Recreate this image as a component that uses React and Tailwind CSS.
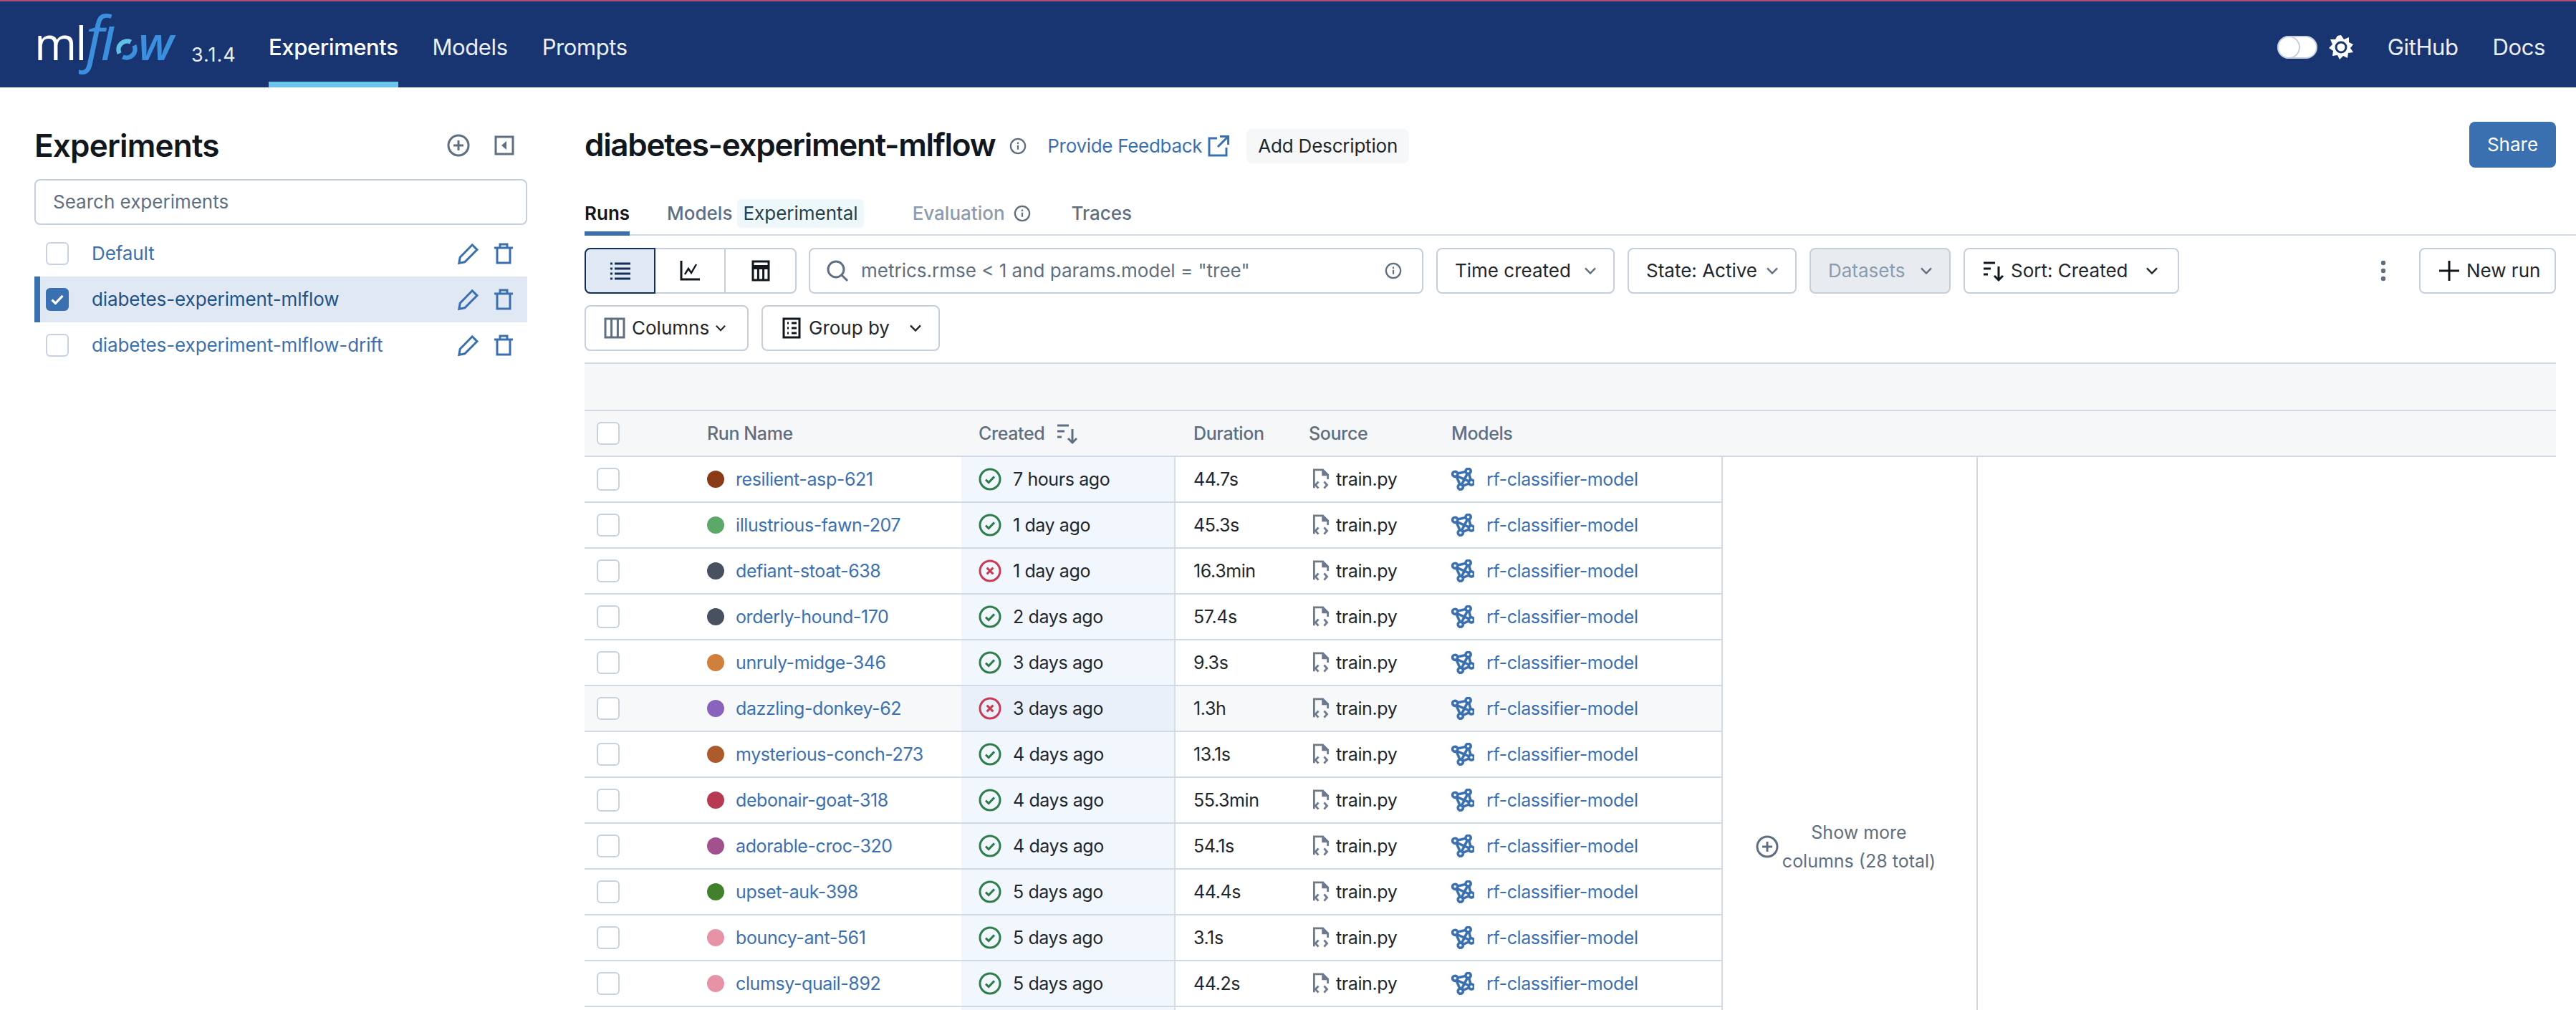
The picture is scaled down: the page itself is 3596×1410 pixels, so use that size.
import React from 'react';

const runs = [
  { name: 'resilient-asp-621', dot: 'bg-[#8b3a17]', created: '7 hours ago', duration: '44.7s', ok: true },
  { name: 'illustrious-fawn-207', dot: 'bg-[#5ba868]', created: '1 day ago', duration: '45.3s', ok: true },
  { name: 'defiant-stoat-638', dot: 'bg-[#475160]', created: '1 day ago', duration: '16.3min', ok: false },
  { name: 'orderly-hound-170', dot: 'bg-[#475160]', created: '2 days ago', duration: '57.4s', ok: true },
  { name: 'unruly-midge-346', dot: 'bg-[#d07f3c]', created: '3 days ago', duration: '9.3s', ok: true },
  { name: 'dazzling-donkey-62', dot: 'bg-[#8a63bf]', created: '3 days ago', duration: '1.3h', ok: false, hover: true },
  { name: 'mysterious-conch-273', dot: 'bg-[#ad5a2c]', created: '4 days ago', duration: '13.1s', ok: true },
  { name: 'debonair-goat-318', dot: 'bg-[#b83a52]', created: '4 days ago', duration: '55.3min', ok: true },
  { name: 'adorable-croc-320', dot: 'bg-[#a3508f]', created: '4 days ago', duration: '54.1s', ok: true },
  { name: 'upset-auk-398', dot: 'bg-[#42802b]', created: '5 days ago', duration: '44.4s', ok: true },
  { name: 'bouncy-ant-561', dot: 'bg-[#e893a5]', created: '5 days ago', duration: '3.1s', ok: true },
  { name: 'clumsy-quail-892', dot: 'bg-[#e893a5]', created: '5 days ago', duration: '44.2s', ok: true },
];

const experiments = [
  { name: 'Default' },
  { name: 'diabetes-experiment-mlflow', active: true },
  { name: 'diabetes-experiment-mlflow-drift' },
];

// 16 unit icons, drawn at whatever size the class gives
function Icon({ className, children }) {
  return (
    <svg viewBox="0 0 16 16" fill="none" stroke="currentColor" strokeWidth="1.5" className={className}>
      {children}
    </svg>
  );
}

const InfoIcon = ({ className }) => (
  <Icon className={className}>
    <circle cx="8" cy="8" r="6.75" />
    <path d="M8 7.2v4M8 4.4v1.6" />
  </Icon>
);

const Chevron = ({ className = 'w-8 h-8 text-[#5f6f80]' }) => (
  <Icon className={className}>
    <path d="M4.5 6.2 8 9.8l3.5-3.6" strokeWidth="1.2" />
  </Icon>
);

const PencilIcon = () => (
  <Icon className="w-8 h-8 text-[#3b70b0]">
    <path d="M10.6 1.9 14 5.3l-8.6 8.6-4 .8.7-4.1z" />
  </Icon>
);

const TrashIcon = () => (
  <Icon className="w-8 h-8 text-[#3b70b0]">
    <path d="M1.5 4h13M5.5 4V1.5h5V4M3.5 4v10.5h9V4" />
  </Icon>
);

const SortIcon = ({ className }) => (
  <Icon className={className}>
    <path d="M1 2.5h8M1 6.5h5M1 10.5h3M11.5 5v9.5M8.5 11.5l3 3 3-3" />
  </Icon>
);

const StatusIcon = ({ ok }) =>
  ok ? (
    <Icon className="w-8 h-8 text-[#2f7d4a] shrink-0">
      <circle cx="8" cy="8" r="7" />
      <path d="m5 8.3 2.1 2L11 6.2" />
    </Icon>
  ) : (
    <Icon className="w-8 h-8 text-[#c83a55] shrink-0">
      <circle cx="8" cy="8" r="7" />
      <path d="m5.8 5.8 4.4 4.4M10.2 5.8l-4.4 4.4" />
    </Icon>
  );

const FileCodeIcon = () => (
  <svg viewBox="0 0 16 18" fill="none" stroke="#6b7a8c" strokeWidth="1.6" className="w-7 h-8 shrink-0">
    <path d="M2.5 16V1.5h7l4 4V9" />
    <path d="M9.5 1.5v4h4" fill="#6b7a8c" />
    <path d="M6 11l-2.4 2.6L6 16.2M10.5 11l2.4 2.6-2.4 2.6" />
  </svg>
);

const ModelIcon = () => (
  <svg viewBox="0 0 16 16" fill="none" stroke="#3b70b0" strokeWidth="1.8" className="w-8 h-8 shrink-0">
    <circle cx="2.6" cy="4.4" r="1.8" />
    <circle cx="11.8" cy="2.4" r="1.8" />
    <circle cx="14" cy="10.2" r="1.8" />
    <circle cx="6.4" cy="13.4" r="1.8" />
    <path d="M4.4 4 10 2.8M4 5.8l8.3 3.6M3.5 6l2.5 5.6M11.2 4.1 7.2 11.8M12.3 4.1l1.2 4.3M12.4 10.9l-4.3 1.8" />
  </svg>
);

function Checkbox({ checked }) {
  if (checked) {
    return (
      <span className="w-8 h-8 rounded-[6px] bg-[#3b70b0] flex items-center justify-center shrink-0">
        <svg viewBox="0 0 16 16" fill="none" stroke="white" strokeWidth="2.2" className="w-6 h-6">
          <path d="m3 8.4 3.3 3.2L13 4.6" />
        </svg>
      </span>
    );
  }
  return <span className="w-8 h-8 rounded-[6px] border-2 border-[#c8d2de] bg-white shrink-0" />;
}

function ToolButton({ className = '', children }) {
  return (
    <div className={`h-16 shrink-0 flex items-center rounded-lg border-2 border-[#c4cfdb] bg-white ${className}`}>
      {children}
    </div>
  );
}

function Logo() {
  return (
    <div className="flex items-baseline text-[#3b8fdd] font-['Open_Sans',sans-serif] leading-none w-[219px] -mt-[29px]">
      <span className="text-white text-[64px] tracking-[-2px] font-medium">ml</span>
      <span className="text-[84px] italic font-normal mr-[-4px]">f</span>
      <span className="text-[62px] italic font-semibold">l</span>
      <svg viewBox="0 0 40 40" fill="none" strokeWidth="8" className="w-8 h-8 self-end mb-[9px] ml-[3px]">
        <path d="M27 7A15 15 0 0 0 7 27" stroke="#62c0e8" />
        <path d="M13 33a15 15 0 0 0 20-20" stroke="#3b8fdd" />
      </svg>
      <span className="text-[66px] italic font-semibold">w</span>
    </div>
  );
}

function Header() {
  return (
    <header className="h-[122px] shrink-0 bg-[#193571] border-t-2 border-[#b04a78] flex items-center pl-12 pr-[43px] pt-2 text-[31px] tracking-[-0.4px] text-[#e8eff8]">
      <Logo />
      <span className="text-[27px] tracking-[1px] mt-[22px] w-[108px] text-[#e8eff8]">3.1.4</span>
      <div className="relative h-full flex items-center font-medium text-white">
        Experiments
        <span className="absolute left-0 right-0 bottom-0 h-2 bg-[#6cc4ea]" />
      </div>
      <span className="ml-12">Models</span>
      <span className="ml-12">Prompts</span>
      <div className="ml-auto flex items-center">
        <div className="w-14 h-8 rounded-full bg-white border-2 border-[#c4cfdb] relative">
          <span className="absolute -left-[2px] -top-[2px] w-8 h-8 rounded-full bg-white border-2 border-[#c4cfdb]" />
        </div>
        <svg viewBox="0 0 34 34" className="w-[34px] h-[34px] ml-4">
          <polygon fill="white" points="17,0 21,6 28,3 28,10 34,13 30,18 34,24 27,25 26,32 20,29 15,34 12,28 5,29 6,22 0,18 5,13 2,6 9,6 12,1" />
          <circle cx="17" cy="17" r="7" fill="none" stroke="#193571" strokeWidth="3" />
        </svg>
        <span className="ml-12">GitHub</span>
        <span className="ml-12">Docs</span>
      </div>
    </header>
  );
}

function Sidebar() {
  return (
    <aside className="w-[768px] shrink-0 pl-12 pr-8 pt-[56px]">
      <div className="flex items-center h-[50px]">
        <h2 className="text-[44px] font-semibold text-[#11171c] tracking-[-0.8px]">Experiments</h2>
        <Icon className="w-8 h-8 text-[#5f6f80] ml-auto mr-8">
          <circle cx="8" cy="8" r="7" />
          <path d="M8 4.5v7M4.5 8h7" />
        </Icon>
        <svg viewBox="0 0 16 16" className="w-8 h-8 text-[#5f6f80] mr-4">
          <rect x="2" y="2" width="12" height="12" fill="none" stroke="currentColor" strokeWidth="1.5" />
          <path d="M9.5 5v6L6 8z" fill="currentColor" />
        </svg>
      </div>
      <div className="mt-[22px] h-16 rounded-lg border-2 border-[#c4cfdb] flex items-center pl-[24px] text-[#5f6f80]">
        Search experiments
      </div>
      <div className="mt-2">
        {experiments.map((exp) => (
          <div
            key={exp.name}
            className={`h-16 flex items-center pr-4 ${
              exp.active ? 'bg-[#e0e8f3] border-l-8 border-[#3b70b0] pl-2 text-[#1f5287]' : 'pl-4 text-[#3b70b0]'
            }`}
          >
            <Checkbox checked={exp.active} />
            <span className="ml-8 tracking-[-0.1px]">{exp.name}</span>
            <span className="ml-auto flex items-center gap-[17px] pr-[1px]">
              <PencilIcon />
              <TrashIcon />
            </span>
          </div>
        ))}
      </div>
    </aside>
  );
}

function TitleBar() {
  return (
    <div className="h-[64px] flex items-center -mt-[2px] pr-[28px]">
      <h1 className="text-[44px] font-semibold text-[#11171c] tracking-[-1.3px]">diabetes-experiment-mlflow</h1>
      <InfoIcon className="w-6 h-6 text-[#5f6f80] ml-5 mt-1" />
      <span className="ml-[29px] mt-1 tracking-[-0.3px] text-[#3b70b0]">Provide Feedback</span>
      <svg viewBox="0 0 16 16" fill="none" stroke="#3b70b0" strokeWidth="1.5" className="w-8 h-8 ml-[7px] mt-1">
        <path d="M7 2.5H1.5v12h12V9M9 1.2h5.8V7M14.5 1.5 7.5 8.5" />
      </svg>
      <span className="ml-[23px] mt-1 h-12 px-4 rounded-lg bg-[#f6f7f9] flex items-center tracking-[-0.2px] text-[#1f272d]">Add Description</span>
      <span className="ml-auto h-16 w-[121px] rounded-lg bg-[#3b70b0] text-white flex items-center justify-center">Share</span>
    </div>
  );
}

function Tabs() {
  return (
    <div className="mt-[35px] h-[60px] flex items-center border-b-2 border-[#d1d9e4] font-medium text-[#5f6f80] relative">
      <span className="relative h-full flex items-center text-[#11171c] font-semibold">
        Runs
        <span className="absolute left-0 right-0 -bottom-[2px] h-[6px] bg-[#3b70b0]" />
      </span>
      <span className="ml-[52px]">Models</span>
      <span className="ml-[7px] px-[8px] h-10 rounded-md bg-[#eef8fb] flex items-center font-normal text-[#23404e]">Experimental</span>
      <span className="ml-[68px] text-[#8b9cae]">Evaluation</span>
      <InfoIcon className="w-6 h-6 ml-3 text-[#5f6f80]" />
      <span className="ml-[57px]">Traces</span>
    </div>
  );
}

function Toolbar() {
  return (
    <div className="mt-[17px] pr-[28px]">
      <div className="flex items-center">
        <div className="flex h-16 w-[296px] shrink-0 rounded-lg border-2 border-[#c4cfdb] relative">
          <div className="w-[99px] -ml-[2px] -my-[2px] rounded-l-lg border-2 border-[#143056] bg-[#e0e8f3] flex items-center justify-center">
            <svg viewBox="0 0 16 16" fill="none" stroke="#143056" strokeWidth="1.5" className="w-8 h-8">
              <path d="M4 3h11M4 6.5h11M4 10h11M4 13.5h11M1 3h1.5M1 6.5h1.5M1 10h1.5M1 13.5h1.5" />
            </svg>
          </div>
          <div className="w-[98px] border-r-2 border-[#c4cfdb] flex items-center justify-center">
            <Icon className="w-8 h-8 text-[#11171c]">
              <path d="M2 1v13h13" />
              <path d="M4.5 10.5 7 6.5l2 3 3.5-6" strokeWidth="1.2" />
            </Icon>
          </div>
          <div className="flex-1 flex items-center justify-center">
            <Icon className="w-8 h-8 text-[#11171c]">
              <rect x="2.5" y="1.5" width="11" height="13" />
              <path d="M2.5 5.5h11" strokeWidth="3" />
              <path d="M6.2 7v7M9.8 7v7" />
            </Icon>
          </div>
        </div>
        <ToolButton className="w-[858px] ml-[17px] pl-[22px] pr-7 text-[#5f6f80]">
          <Icon className="w-8 h-8 shrink-0">
            <circle cx="7" cy="7" r="5.5" />
            <path d="m11 11 4 4" />
          </Icon>
          <span className="ml-[17px]">metrics.rmse &lt; 1 and params.model = "tree"</span>
          <InfoIcon className="w-6 h-6 ml-auto" />
        </ToolButton>
        <ToolButton className="w-[249px] ml-[18px] pl-6 pr-4 justify-between text-[#1f272d]">
          Time created <Chevron />
        </ToolButton>
        <ToolButton className="w-[236px] ml-[18px] pl-6 pr-4 justify-between text-[#1f272d]">
          State: Active <Chevron />
        </ToolButton>
        <ToolButton className="w-[197px] ml-[18px] pl-6 pr-4 justify-between !bg-[#e8ebf0] text-[#8b9cae]">
          Datasets <Chevron />
        </ToolButton>
        <ToolButton className="w-[301px] ml-[18px] pl-6 pr-5 text-[#1f272d]">
          <SortIcon className="w-8 h-8 shrink-0 text-[#11171c]" />
          <span className="ml-2">Sort: Created</span>
          <Chevron className="w-8 h-8 ml-auto text-[#1f272d]" />
        </ToolButton>
        <svg viewBox="0 0 8 32" className="w-2 h-8 ml-auto mr-[46px] text-[#5f6f80]" fill="currentColor">
          <circle cx="4" cy="5" r="3.2" />
          <circle cx="4" cy="16" r="3.2" />
          <circle cx="4" cy="27" r="3.2" />
        </svg>
        <ToolButton className="w-[191px] pl-6 text-[#1f272d]">
          <Icon className="w-8 h-8 text-[#11171c] shrink-0">
            <path d="M8 1v14M1 8h14" />
          </Icon>
          <span className="ml-2">New run</span>
        </ToolButton>
      </div>
      <div className="flex items-center mt-4">
        <ToolButton className="w-[229px] pl-6 text-[#1f272d]">
          <Icon className="w-8 h-8 text-[#5f6f80] shrink-0">
            <rect x="1.5" y="1.5" width="13" height="13" />
            <path d="M5.8 1.5v13M10.2 1.5v13" />
          </Icon>
          <span className="ml-2">Columns</span>
          <Chevron className="w-7 h-7 ml-[2px] text-[#1f272d]" />
        </ToolButton>
        <ToolButton className="w-[249px] ml-[18px] pl-6 text-[#1f272d]">
          <Icon className="w-8 h-8 text-[#11171c] shrink-0">
            <rect x="2.5" y="1.5" width="11" height="13" />
            <path d="M5 4.5h1M8 4.5h3.5M5 8h1M8 8h3.5M5 11.5h1M8 11.5h3.5" />
          </Icon>
          <span className="ml-2">Group by</span>
          <Chevron className="w-8 h-8 ml-auto mr-4 text-[#1f272d]" />
        </ToolButton>
      </div>
    </div>
  );
}

// column widths shared by the header and the rows
const cols = 'grid grid-cols-[171px_355px_299px_186px_199px_377px]';

function RunRow({ run }) {
  return (
    <div className={`${cols} h-16 border-b-2 border-[#d1d9e4] ${run.hover ? 'bg-[#f7f8fa]' : ''}`}>
      <div className="flex items-center pl-[17px]">
        <Checkbox />
      </div>
      <div className="flex items-center text-[#3b70b0]">
        <span className={`w-6 h-6 rounded-full shrink-0 ${run.dot}`} />
        <span className="ml-4">{run.name}</span>
      </div>
      <div className={`flex items-center pl-6 border-r-2 border-[#d5dde8] ${run.hover ? 'bg-[#e9f0f9]' : 'bg-[#f2f7fe]'}`}>
        <StatusIcon ok={run.ok} />
        <span className="ml-4 text-[#1f272d]">{run.created}</span>
      </div>
      <div className="flex items-center pl-[25px] text-[#1f272d]">{run.duration}</div>
      <div className="flex items-center pl-[3px] text-[#1f272d]">
        <FileCodeIcon />
        <span className="ml-[7px]">train.py</span>
      </div>
      <div className="flex items-center text-[#3b70b0]">
        <ModelIcon />
        <span className="ml-[17px]">rf-classifier-model</span>
      </div>
    </div>
  );
}

function RunsTable() {
  return (
    <div className="mt-4 mr-[28px] text-[25px] tracking-[-0.4px]">
      <div className="h-[66px] border-t-2 border-[#d1d9e4] bg-[#f6f7f9]" />
      <div className={`${cols} h-[66px] border-y-2 border-[#d1d9e4] bg-[#f6f7f9] text-[#5f6f80] font-medium`}>
        <div className="flex items-center pl-[17px]">
          <Checkbox />
        </div>
        <div className="flex items-center">Run Name</div>
        <div className="flex items-center pl-6">
          Created
          <SortIcon className="w-8 h-8 ml-4" />
        </div>
        <div className="flex items-center pl-[25px]">Duration</div>
        <div className="flex items-center">Source</div>
        <div className="flex items-center">Models</div>
      </div>
      <div className="flex">
        <div className="w-[1587px] shrink-0">
          {runs.map((run) => (
            <RunRow key={run.name} run={run} />
          ))}
          <div className={`${cols} h-16`}>
            <div />
            <div />
            <div className="bg-[#f2f7fe] border-r-2 border-[#d5dde8]" />
          </div>
        </div>
        <div className="w-[358px] shrink-0 border-x-2 border-[#d1d9e4] text-[#5f6f80] pl-[46px] pt-[504px]">
          <div className="flex items-center">
            <Icon className="w-8 h-8 shrink-0">
              <circle cx="8" cy="8" r="7" />
              <path d="M8 4.5v7M4.5 8h7" />
            </Icon>
            <span className="text-center tracking-normal leading-[40px] w-[224px]">
              Show more
              <br />
              columns (28 total)
            </span>
          </div>
        </div>
      </div>
    </div>
  );
}

export default function App() {
  return (
    <div className="h-[1410px] w-[3596px] overflow-hidden flex flex-col bg-white text-[26px] leading-[40px] font-['Inter','Noto_Sans',sans-serif]">
      <Header />
      <div className="flex flex-1 min-h-0">
        <Sidebar />
        <main className="flex-1 min-w-0 pl-[48px] pt-[50px]">
          <TitleBar />
          <Tabs />
          <Toolbar />
          <RunsTable />
        </main>
      </div>
    </div>
  );
}
